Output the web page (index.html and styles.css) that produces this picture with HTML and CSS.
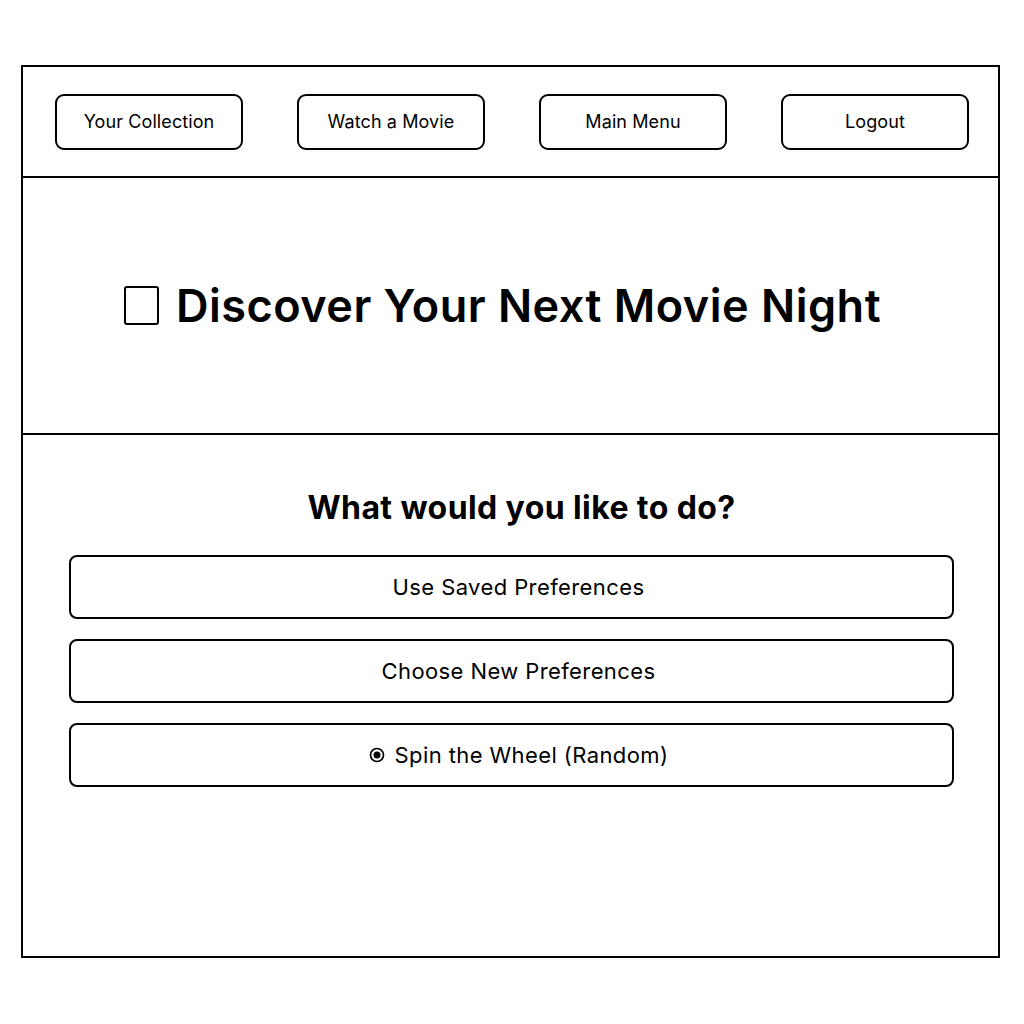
FILE: index.html
```html
<!DOCTYPE html>
<html lang="en">
<head>
<meta charset="utf-8">
<title>Discover Your Next Movie Night</title>
<link rel="stylesheet" href="styles.css">
</head>
<body>
<div class="frame">
  <header class="nav">
    <button class="nav-btn">Your Collection</button>
    <button class="nav-btn">Watch a Movie</button>
    <button class="nav-btn">Main Menu</button>
    <button class="nav-btn">Logout</button>
  </header>
  <section class="hero">
    <h1 class="title"><span class="tofu"></span>Discover Your Next Movie Night</h1>
  </section>
  <main class="choices">
    <h2 class="question">What would you like to do?</h2>
    <div class="options">
      <button class="option">Use Saved Preferences</button>
      <button class="option">Choose New Preferences</button>
      <button class="option"><svg class="radio" width="16" height="16" viewBox="0 0 16 16"><circle cx="8" cy="8" r="6.5" fill="none" stroke="#000" stroke-width="1.7"/><circle cx="8" cy="8" r="3.5" fill="#000"/></svg>Spin the Wheel (Random)</button>
    </div>
  </main>
</div>
</body>
</html>
```
FILE: styles.css
```css
* { box-sizing: border-box; }
html, body { margin: 0; padding: 0; background: #fff; }
body { font-family: Inter, "Noto Sans", sans-serif; color: #000; }
.frame {
  margin: 65px 0 0 21px;
  width: 979px;
  height: 893px;
  border: 2px solid #000;
  display: flex;
  flex-direction: column;
}
.nav {
  display: flex;
  justify-content: space-between;
  align-items: center;
  height: 111px;
  padding: 0 29px 0 32px;
  border-bottom: 2px solid #000;
}
.nav-btn {
  width: 188px;
  height: 56px;
  border: 2px solid #000;
  border-radius: 9px;
  background: #fff;
  font-family: Inter, sans-serif;
  font-size: 18px;
  letter-spacing: 0.1px;
  color: #000;
}
.hero {
  height: 257px;
  border-bottom: 2px solid #000;
  display: flex;
  align-items: center;
  justify-content: center;
  padding-right: 16px;
}
.title {
  margin: 0;
  font-size: 45px;
  font-weight: 600;
  letter-spacing: 0.5px;
  display: flex;
  align-items: center;
}
.tofu {
  display: inline-block;
  width: 35px;
  height: 39px;
  border: 2.5px solid #000;
  border-radius: 3px;
  margin-right: 17px;
}
.choices {
  flex: 1;
  padding: 54px 44px 0 46px;
}
.question {
  margin: 0 0 28px;
  padding-left: 20px;
  text-align: center;
  font-size: 32px;
  font-weight: 700;
  letter-spacing: 0.4px;
  line-height: 38px;
}
.options {
  display: flex;
  flex-direction: column;
  gap: 20px;
}
.option {
  height: 64px;
  border: 2px solid #000;
  border-radius: 8px;
  background: #fff;
  font-family: Inter, sans-serif;
  font-size: 22px;
  letter-spacing: 0.4px;
  color: #000;
  display: flex;
  align-items: center;
  justify-content: center;
  gap: 10px;
  padding-left: 20px;
}
.radio { display: block; }
```
